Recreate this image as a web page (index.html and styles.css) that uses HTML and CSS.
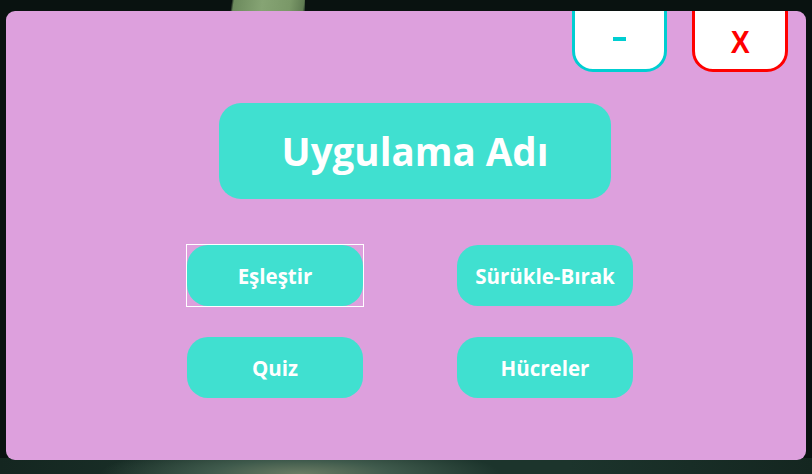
FILE: index.html
```html
<!DOCTYPE html>
<html lang="tr">
<head>
<meta charset="utf-8">
<title>Uygulama Adı</title>
<link rel="stylesheet" href="styles.css">
</head>
<body>
<div class="backdrop">
  <div class="panel">
    <div class="window-controls">
      <button class="ctl ctl-min"><span class="dash"></span></button>
      <button class="ctl ctl-close"><span class="x-glyph">X</span></button>
    </div>
    <div class="title">Uygulama Adı</div>
    <div class="menu">
      <button class="menu-btn focused">Eşleştir</button>
      <button class="menu-btn">Sürükle-Bırak</button>
      <button class="menu-btn">Quiz</button>
      <button class="menu-btn">Hücreler</button>
    </div>
  </div>
</div>
</body>
</html>
```
FILE: styles.css
```css
html, body {
  margin: 0;
  padding: 0;
}
body {
  width: 812px;
  height: 474px;
  overflow: hidden;
  background:
    linear-gradient(98deg, rgba(0,0,0,0) 0%, rgba(0,0,0,0) 6%, #6c8a5d 9%, #86a474 45%, #7a9868 80%, #5f7b52 97%, #1a2a20 100%) 227px 0 / 78px 11px no-repeat,
    radial-gradient(ellipse 200px 30px at 300px 474px, #6b7d64 0%, #3f5a4c 45%, rgba(25,45,38,0) 100%),
    linear-gradient(90deg, #142620 0%, #1c342c 30%, #1c342c 70%, #142620 100%) 0 458px / 100% 16px no-repeat,
    #091210;
  font-family: "Open Sans", "Noto Sans", sans-serif;
}
.backdrop {
  padding: 11px 6px 14px 6px;
}
.panel {
  height: 449px;
  background: #dda0dd;
  border-radius: 9px;
  overflow: hidden;
  display: flex;
  flex-direction: column;
  align-items: flex-start;
}
.window-controls {
  align-self: stretch;
  display: flex;
  justify-content: flex-end;
  gap: 25px;
  padding-right: 18px;
  margin-top: -20px;
}
.ctl {
  box-sizing: border-box;
  height: 81px;
  background: #ffffff;
  border: 3px solid;
  border-radius: 21px;
  font-family: "Liberation Sans", Arial, sans-serif;
  font-weight: 700;
  font-size: 31px;
  padding: 20px 0 0 0;
  line-height: 1;
  display: flex;
  align-items: center;
  justify-content: center;
  cursor: pointer;
}
.ctl-min {
  width: 95px;
  border-color: #00ced1;
  padding-top: 14px;
}
.dash {
  display: block;
  width: 13px;
  height: 4px;
  background: #00ced1;
}
.ctl-close {
  width: 96px;
  color: #ff0000;
  border-color: #ff0000;
  padding-top: 22px;
}
.x-glyph {
  display: inline-block;
  transform: scaleX(0.92);
}
.title {
  box-sizing: border-box;
  margin: 31px 0 0 213px;
  width: 392px;
  height: 96px;
  border-radius: 22px;
  background: #40e0d0;
  color: #ffffff;
  font-weight: 700;
  font-size: 38.5px;
  display: flex;
  align-items: center;
  justify-content: center;
}
.menu {
  margin: 46px 0 0 181px;
  display: grid;
  grid-template-columns: 176px 176px;
  grid-auto-rows: 61px;
  column-gap: 94px;
  row-gap: 31px;
}
.menu-btn {
  position: relative;
  border: none;
  border-radius: 21px;
  background: #40e0d0;
  color: #ffffff;
  font-family: "Open Sans", "Noto Sans", sans-serif;
  font-weight: 700;
  font-size: 20.5px;
  padding: 0;
  cursor: pointer;
}
.focused::after {
  content: "";
  position: absolute;
  top: -1px;
  left: -1px;
  right: -1px;
  bottom: -1px;
  border: 1px solid #ffffff;
  pointer-events: none;
}
```
